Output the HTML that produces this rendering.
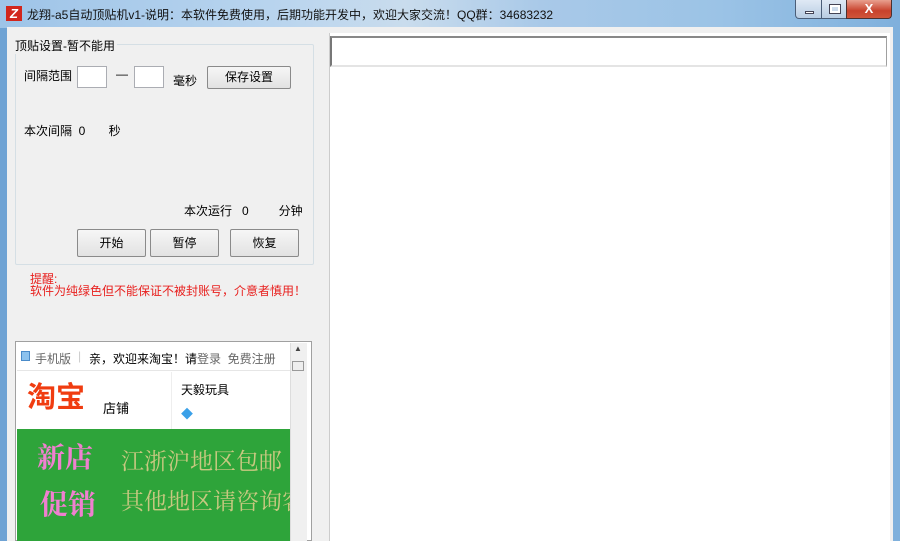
<!DOCTYPE html>
<html><head><meta charset="utf-8"><style>
*{margin:0;padding:0;box-sizing:border-box}
body{width:900px;height:541px;overflow:hidden;background:#6fa3d4;font-family:"Liberation Sans","Noto Sans CJK SC",sans-serif;font-size:12px;color:#000;position:relative}
.a{position:absolute}
.title{left:0;top:0;width:900px;height:28px;background:linear-gradient(90deg,#9ec4e8 0%,#b8d4ee 30%,#c9dced 45%,#a9c9e8 60%,#9bc3e6 80%,#7fb0dc 100%)}
.client{left:7px;top:27px;width:886px;height:514px;background:#f0f0f0}
.btn{position:absolute;background:linear-gradient(#f6f6f6,#e2e2e2);border:1px solid #8a8a8a;border-radius:2px;text-align:center;line-height:24px;font-size:12px}
.inp{position:absolute;background:#fff;border:1px solid #abadb3;width:30px;height:22px}
.red{color:#e8201e}
</style></head><body>
<div class="a title"></div>
<div class="a" style="left:6px;top:6px;width:16px;height:15px;background:#d2261c;color:#fff;font-weight:bold;font-size:13px;line-height:15px;text-align:center;font-style:italic">Z</div>
<div class="a" style="left:27px;top:6px;font-size:12px;color:#111;white-space:nowrap">龙翔-a5自动顶贴机v1-说明：本软件免费使用，后期功能开发中，欢迎大家交流！QQ群：34683232</div>
<div class="a" style="left:795px;top:0;width:27px;height:19px;background:linear-gradient(#dfe9f5,#b9cde3);border:1px solid #4b5e78;border-top:none;border-radius:0 0 0 4px"><div class="a" style="left:9px;top:11px;width:9px;height:3px;background:#fff;border:1px solid #445"></div></div>
<div class="a" style="left:821px;top:0;width:26px;height:19px;background:linear-gradient(#dfe9f5,#b9cde3);border:1px solid #4b5e78;border-top:none"><div class="a" style="left:8px;top:5px;width:10px;height:8px;border:2px solid #fff;outline:1px solid #445"></div></div>
<div class="a" style="left:846px;top:0;width:46px;height:19px;background:linear-gradient(#e8a08f,#c8422c 60%,#d0553a);border:1px solid #4b3030;border-top:none;border-radius:0 0 4px 0;color:#fff;font-weight:bold;text-align:center;line-height:18px;font-size:13px">X</div>
<div class="a client"></div>
<!-- group box -->
<div class="a" style="left:15px;top:44px;width:299px;height:221px;border:1px solid #d5dfe5;border-radius:2px"></div>
<div class="a" style="left:14px;top:37px;background:#f0f0f0;padding:0 2px 0 1px">顶贴设置-暂不能用</div>
<div class="a" style="left:24px;top:67px">间隔范围</div>
<div class="inp" style="left:77px;top:66px"></div>
<div class="a" style="left:116px;top:67px">—</div>
<div class="inp" style="left:134px;top:66px"></div>
<div class="a" style="left:173px;top:72px">毫秒</div>
<div class="btn" style="left:207px;top:66px;width:84px;height:23px;line-height:21px">保存设置</div>
<div class="a" style="left:24px;top:122px">本次间隔&nbsp; 0&nbsp;&nbsp;&nbsp;&nbsp;&nbsp;&nbsp; 秒</div>
<div class="a" style="left:184px;top:202px">本次运行&nbsp;&nbsp; 0&nbsp;&nbsp;&nbsp;&nbsp;&nbsp;&nbsp;&nbsp;&nbsp; 分钟</div>
<div class="btn" style="left:77px;top:229px;width:69px;height:28px;line-height:26px">开始</div>
<div class="btn" style="left:150px;top:229px;width:69px;height:28px;line-height:26px">暂停</div>
<div class="btn" style="left:230px;top:229px;width:69px;height:28px;line-height:26px">恢复</div>
<div class="a red" style="left:30px;top:273px;line-height:12px">提醒:<br>软件为纯绿色但不能保证不被封账号，介意者慎用！</div>
<!-- web browser -->
<div class="a" style="left:15px;top:341px;width:297px;height:200px;border:1px solid #a0a0a0;background:#fff"></div>
<div class="a" style="left:17px;top:343px;width:273px;height:198px;background:#fff"></div>
<div class="a" style="left:290px;top:343px;width:17px;height:198px;background:#f0f0f0;border-left:1px solid #ddd"></div>
<div class="a" style="left:294px;top:344px;font-size:8px;color:#444">▲</div>
<div class="a" style="left:292px;top:361px;width:12px;height:10px;border:1px solid #999;background:#eee"></div>
<div class="a" style="left:21px;top:351px;width:9px;height:10px;background:#8cc2ee;border:1px solid #4a8bc9"></div>
<div class="a" style="left:35px;top:350px;color:#666">手机版</div>
<div class="a" style="left:78px;top:349px;color:#ccc">|</div>
<div class="a" style="left:89px;top:350px;color:#000">亲，欢迎来淘宝！请<span style="color:#666">登录&nbsp; 免费注册</span></div>
<div class="a" style="left:17px;top:370px;width:273px;height:1px;background:#e6e6e6"></div>
<div class="a" style="left:171px;top:372px;width:1px;height:57px;background:#eee"></div>
<div class="a" style="left:27px;top:380px;font-size:29px;font-weight:bold;color:#f03c10;line-height:36px">淘宝</div>
<div class="a" style="left:103px;top:398px;font-size:13px">店铺</div>
<div class="a" style="left:181px;top:381px">天毅玩具</div>
<div class="a" style="left:181px;top:405px;color:#3aa0e8;font-size:12px">◆</div>
<div class="a" style="left:17px;top:429px;width:273px;height:112px;background:#2ea43a"></div>
<div class="a" style="left:37px;top:438px;font-size:28px;font-weight:bold;color:#f080d0;font-family:'Noto Serif CJK SC',serif;line-height:36px">新店</div>
<div class="a" style="left:40px;top:485px;font-size:28px;font-weight:bold;color:#f080d0;font-family:'Noto Serif CJK SC',serif;line-height:36px">促销</div>
<div class="a" style="left:121px;top:445px;width:169px;overflow:hidden;white-space:nowrap;font-size:23px;color:#c8c880;font-family:'Noto Serif CJK SC',serif;line-height:30px">江浙沪地区包邮</div>
<div class="a" style="left:121px;top:485px;width:169px;overflow:hidden;white-space:nowrap;font-size:23px;color:#c8c880;font-family:'Noto Serif CJK SC',serif;line-height:30px">其他地区请咨询客服</div>
<!-- right panel -->
<div class="a" style="left:329px;top:33px;width:561px;height:508px;background:#fff;border-left:1px solid #ccc"></div>
<div class="a" style="left:330px;top:36px;width:557px;height:31px;border:1px solid #a0a0a0;border-left:2px solid #777;border-top:2px solid #888;border-bottom:2px solid #e4e4e4"></div>
<div class="a" style="left:893px;top:27px;width:7px;height:514px;background:#7fb0dc"></div>
</body></html>
